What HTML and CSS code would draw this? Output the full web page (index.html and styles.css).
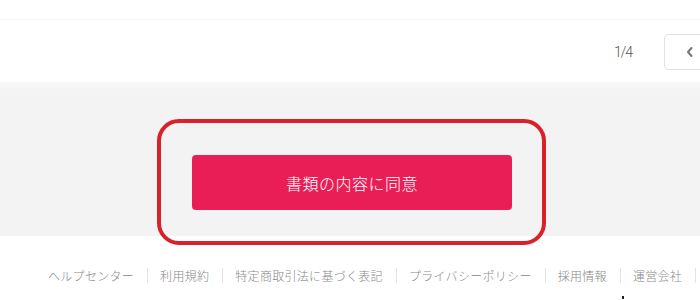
FILE: index.html
```html
<!DOCTYPE html>
<html lang="ja">
<head>
<meta charset="utf-8">
<link rel="stylesheet" href="styles.css">
</head>
<body>
<div class="top"></div>
<div class="toolbar">
  <span class="pager">1/4</span>
  <button class="prev" type="button">
    <svg width="10" height="12" viewBox="0 0 10 12"><path d="M6.5 2 L3 6 L6.5 10" fill="none" stroke="#777" stroke-width="2" stroke-linecap="round" stroke-linejoin="round"/></svg>
  </button>
</div>
<main class="main">
  <button class="agree" type="button">書類の内容に同意</button>
  <div class="highlight"></div>
</main>
<footer class="footer">
  <a>ヘルプセンター</a><span class="sep"></span>
  <a>利用規約</a><span class="sep"></span>
  <a>特定商取引法に基づく表記</a><span class="sep"></span>
  <a>プライバシーポリシー</a><span class="sep"></span>
  <a>採用情報</a><span class="sep"></span>
  <a>運営会社</a><span class="sep"></span>
</footer>
<span class="dot"></span>
</body>
</html>
```
FILE: styles.css
```css
html, body {
  margin: 0;
  padding: 0;
  background: #fff;
  width: 700px;
  height: 300px;
  overflow: hidden;
  font-family: "Noto Sans CJK JP", "Noto Sans", sans-serif;
  position: relative;
}
.top {
  height: 19px;
  background: #fff;
  border-bottom: 1px solid #f7f7f7;
}
.toolbar {
  height: 62px;
  display: flex;
  align-items: center;
  justify-content: flex-end;
  background: #fff;
  padding-top: 1px;
  box-sizing: border-box;
}
.pager {
  font-size: 14px;
  font-weight: 300;
  color: #555;
  font-family: "Roboto", "Liberation Sans", sans-serif;
  letter-spacing: -1px;
  margin-right: 32px;
}
.prev {
  width: 52px;
  height: 36px;
  margin-right: -16px;
  border: 1px solid #e2e2e2;
  border-radius: 4px;
  background: #fff;
  display: flex;
  align-items: center;
  justify-content: center;
  padding: 0;
}
.main {
  height: 154px;
  background: linear-gradient(#f8f8f8 0, #f3f3f3 8px, #f3f3f3 100%);
  position: relative;
  padding-top: 73px;
  box-sizing: border-box;
}
.agree {
  display: block;
  margin-left: 192px;
  width: 320px;
  height: 55px;
  border: none;
  border-radius: 4px;
  background: #e91e57;
  color: #fff;
  font-family: "Noto Sans CJK JP", sans-serif;
  font-weight: 300;
  font-size: 16px;
  letter-spacing: 0.5px;
  padding: 0;
}
.highlight {
  position: absolute;
  left: 157px;
  top: 37px;
  width: 381px;
  height: 118px;
  border: 4px solid #d8212a;
  border-radius: 22px;
}
.footer {
  display: flex;
  align-items: center;
  padding-left: 48px;
  padding-top: 14px;
  height: 64px;
  box-sizing: border-box;
  white-space: nowrap;
}
.footer a {
  font-size: 12px;
  font-weight: 300;
  color: #888;
  letter-spacing: 0.3px;
}
.sep {
  width: 1px;
  height: 15px;
  background: #e3e3e3;
  margin: 0 12px 0 13px;
  flex: none;
}
.dot {
  position: absolute;
  left: 622px;
  top: 296px;
  width: 2px;
  height: 3px;
  background: #222;
}
```
